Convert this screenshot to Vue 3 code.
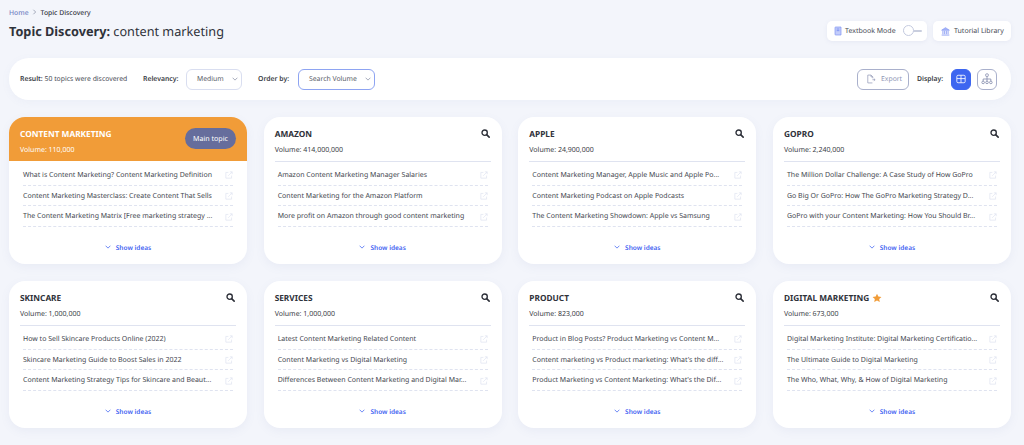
<template>
  <div class="page">
    <div class="breadcrumb">
      <span class="crumb-home">Home</span>
      <svg class="crumb-sep" viewBox="0 0 6 8" width="5" height="6"><path d="M1.5 1l3 3-3 3" fill="none" stroke="#8a90a6" stroke-width="1" /></svg>
      <span class="crumb-current">Topic Discovery</span>
    </div>

    <div class="head">
      <h1 class="title"><strong>Topic Discovery:</strong> content marketing</h1>
      <div class="head-actions">
        <div class="pill pill-mode">
          <svg viewBox="0 0 12 14" width="8" height="10">
            <path d="M1.5 12V2a1 1 0 0 1 1-1h8v12h-8a1 1 0 0 1-1-1z" fill="#c3cdfb" stroke="#7d92f2" stroke-width="1" />
            <path d="M4 4h4M4 6.500h4" stroke="#5f78ee" stroke-width="1" />
          </svg>
          <span>Textbook Mode</span>
          <span class="switch"><span class="knob"></span></span>
        </div>
        <div class="pill pill-lib">
          <svg viewBox="0 0 14 14" width="9" height="9">
            <path d="M1 5l6-4 6 4z" fill="#a9b7f9" stroke="#7d92f2" stroke-width="1" />
            <path d="M3 6v5M5.700 6v5M8.300 6v5M11 6v5M1 12.500h12" stroke="#7d92f2" stroke-width="1.300" />
          </svg>
          <span>Tutorial Library</span>
        </div>
      </div>
    </div>

    <div class="toolbar">
      <div class="result"><b>Result:</b> 50 topics were discovered</div>
      <b class="label label-rel">Relevancy:</b>
      <div class="select select-rel">
        <span>Medium</span>
        <svg viewBox="0 0 8 5" width="6" height="4"><path d="M.8.800L4 4l3.200-3.200" fill="none" stroke="#8a90a6" stroke-width="1" /></svg>
      </div>
      <b class="label label-order">Order by:</b>
      <div class="select select-order">
        <span>Search Volume</span>
        <svg viewBox="0 0 8 5" width="6" height="4"><path d="M.8.800L4 4l3.200-3.200" fill="none" stroke="#8a90a6" stroke-width="1" /></svg>
      </div>
      <div class="toolbar-right">
        <div class="export">
          <svg viewBox="0 0 14 14" width="10" height="10">
            <path d="M9 12.500H2.500v-11H7l2.500 2.500v2M7 1.500V4h2.500" fill="none" stroke="#8f97b5" stroke-width="1" />
            <path d="M9 8h3.500M11 6.500L12.800 8 11 9.500" fill="none" stroke="#8f97b5" stroke-width="1" />
          </svg>
          <span>Export</span>
        </div>
        <b class="label label-display">Display:</b>
        <div class="view-btn view-active">
          <svg viewBox="0 0 12 12" width="10" height="10">
            <rect x="1" y="1.500" width="10" height="9" rx="1.500" fill="none" stroke="#fff" stroke-width="1" />
            <path d="M1 5.500h10M6 1.500v9" stroke="#fff" stroke-width="1" />
          </svg>
        </div>
        <div class="view-btn">
          <svg viewBox="0 0 14 14" width="12" height="12">
            <rect x="5.500" y="1" width="3" height="3" rx=".8" fill="none" stroke="#7d86a8" stroke-width=".9" />
            <circle cx="2.500" cy="11" r="1.500" fill="none" stroke="#7d86a8" stroke-width=".9" />
            <circle cx="7" cy="11" r="1.500" fill="none" stroke="#7d86a8" stroke-width=".9" />
            <circle cx="11.500" cy="11" r="1.500" fill="none" stroke="#7d86a8" stroke-width=".9" />
            <path d="M7 4v5.500M2.500 9.500V7h9v2.500" fill="none" stroke="#7d86a8" stroke-width=".9" />
          </svg>
        </div>
      </div>
    </div>

    <div class="grid">
      <div v-for="topic in topics" :key="topic.name" class="card" :class="{ 'card-main': topic.main }">
        <div class="card-head">
          <div class="card-info">
            <div class="card-name">
              {{ topic.name }}
              <svg v-if="topic.star" class="star" viewBox="0 0 24 24" width="10" height="10">
                <path d="M12 1.500l3.200 6.900 7.500.9-5.500 5.100 1.500 7.400L12 18.100l-6.700 3.700 1.500-7.400L1.300 9.300l7.500-.9z" fill="#f19c38" />
              </svg>
            </div>
            <div class="card-volume">Volume: {{ topic.volume }}</div>
          </div>
          <div v-if="topic.main" class="main-tag">Main topic</div>
          <svg v-else class="search" viewBox="0 0 16 16" width="9" height="9">
            <circle cx="6.500" cy="6.500" r="4.700" fill="none" stroke="#2c2f38" stroke-width="2.400" />
            <path d="M10 10l4.500 4.500" stroke="#2c2f38" stroke-width="2.800" stroke-linecap="round" />
          </svg>
        </div>
        <ul class="links">
          <li v-for="link in topic.links" :key="link">
            <span class="link-text">{{ link }}</span>
            <svg class="ext" viewBox="0 0 14 14" width="8" height="8">
              <path d="M11.500 8v4.500h-10v-10H6" fill="none" stroke="#dfe3f0" stroke-width="1.200" />
              <path d="M5.500 8.500L12.500 1.500M8.500 1.500h4v4" fill="none" stroke="#dfe3f0" stroke-width="1.200" />
            </svg>
          </li>
        </ul>
        <div class="ideas">
          <svg viewBox="0 0 8 5" width="6" height="4"><path d="M.8.800L4 4l3.200-3.200" fill="none" stroke="#3f63f2" stroke-width="1" /></svg>
          <span>Show ideas</span>
        </div>
      </div>
    </div>
  </div>
</template>

<script setup>
const topics = [
  {
    name: 'CONTENT MARKETING',
    volume: '110,000',
    main: true,
    links: [
      'What is Content Marketing? Content Marketing Definition',
      'Content Marketing Masterclass: Create Content That Sells',
      'The Content Marketing Matrix [Free marketing strategy ...'
    ]
  },
  {
    name: 'AMAZON',
    volume: '414,000,000',
    links: [
      'Amazon Content Marketing Manager Salaries',
      'Content Marketing for the Amazon Platform',
      'More profit on Amazon through good content marketing'
    ]
  },
  {
    name: 'APPLE',
    volume: '24,900,000',
    links: [
      'Content Marketing Manager, Apple Music and Apple Po...',
      'Content Marketing Podcast on Apple Podcasts',
      'The Content Marketing Showdown: Apple vs Samsung'
    ]
  },
  {
    name: 'GOPRO',
    volume: '2,240,000',
    links: [
      'The Million Dollar Challenge: A Case Study of How GoPro',
      'Go Big Or GoPro: How The GoPro Marketing Strategy D...',
      'GoPro with your Content Marketing: How You Should Br...'
    ]
  },
  {
    name: 'SKINCARE',
    volume: '1,000,000',
    links: [
      'How to Sell Skincare Products Online (2022)',
      'Skincare Marketing Guide to Boost Sales in 2022',
      'Content Marketing Strategy Tips for Skincare and Beaut...'
    ]
  },
  {
    name: 'SERVICES',
    volume: '1,000,000',
    links: [
      'Latest Content Marketing Related Content',
      'Content Marketing vs Digital Marketing',
      'Differences Between Content Marketing and Digital Mar...'
    ]
  },
  {
    name: 'PRODUCT',
    volume: '823,000',
    links: [
      'Product in Blog Posts? Product Marketing vs Content M...',
      "Content marketing vs Product marketing: What's the diff...",
      "Product Marketing vs Content Marketing: What's the Dif..."
    ]
  },
  {
    name: 'DIGITAL MARKETING',
    volume: '673,000',
    star: true,
    links: [
      'Digital Marketing Institute: Digital Marketing Certificatio...',
      'The Ultimate Guide to Digital Marketing',
      'The Who, What, Why, & How of Digital Marketing'
    ]
  }
]
</script>

<style>
html,
body {
  background: #f3f5fb;
}
</style>

<style scoped>
svg {
  flex: none;
}

.page {
  box-sizing: border-box;
  width: 1024px;
  height: 445px;
  overflow: hidden;
  padding: 7px 13px 0 9px;
  font-family: "Noto Sans", "Open Sans", sans-serif;
  text-rendering: geometricPrecision;
  color: #33363f;
  background: #f3f5fb;
}

.breadcrumb {
  display: flex;
  align-items: center;
  gap: 3px;
  height: 10px;
  font-size: 6.8px;
  font-weight: 500;
  white-space: nowrap;
}

.crumb-home {
  color: #7484c4;
}

.crumb-sep {
  margin-right: 1px;
}

.head {
  display: flex;
  justify-content: space-between;
  align-items: flex-start;
  height: 41px;
}

.title {
  margin: 4px 0 0;
  font-size: 12.7px;
  line-height: 20px;
  font-weight: 400;
  color: #2f323a;
  white-space: nowrap;
}

.title strong {
  font-weight: 700;
}

.head-actions {
  display: flex;
  gap: 6px;
  margin-top: 4px;
}

.pill {
  box-sizing: border-box;
  display: flex;
  align-items: center;
  height: 20px;
  border-radius: 5px;
  background: #fff;
  font-size: 7px;
  color: #4a4d57;
  white-space: nowrap;
  box-shadow: 0 1px 4px rgba(120, 130, 180, 0.1);
}

.pill-mode {
  width: 100px;
  gap: 3px;
  padding: 0 7px;
}

.pill-lib {
  width: 78px;
  gap: 4px;
  padding: 0 8px;
}

.switch {
  position: relative;
  flex: none;
  width: 19px;
  height: 2px;
  margin-left: 4px;
  background: #c9cede;
  border-radius: 2px;
}

.knob {
  position: absolute;
  left: 0;
  top: -5px;
  box-sizing: border-box;
  width: 11px;
  height: 11px;
  border-radius: 50%;
  background: #fff;
  border: 1px solid #c5cbe0;
}

.toolbar {
  display: flex;
  align-items: center;
  height: 42px;
  padding: 0 14px 0 11px;
  border-radius: 20px;
  background: #fff;
  font-size: 6.85px;
  color: #4a4d57;
  white-space: nowrap;
  box-shadow: 0 2px 8px rgba(120, 130, 180, 0.06);
}

.toolbar b,
.label {
  font-weight: 600;
  color: #3a3d46;
}

.result {
  width: 123px;
}

.label-rel {
  width: 43px;
}

.select {
  box-sizing: border-box;
  display: flex;
  align-items: center;
  justify-content: space-between;
  height: 21px;
  border-radius: 6px;
  border: 1px solid #d9def0;
  padding: 0 3px 0 10px;
  color: #5a5d68;
}

.select-rel {
  width: 56px;
  margin-right: 16px;
}

.label-order {
  width: 40px;
}

.select-order {
  width: 77px;
  border-color: #8ea4f2;
}

.toolbar-right {
  display: flex;
  align-items: center;
  margin-left: auto;
}

.export {
  box-sizing: border-box;
  display: flex;
  align-items: center;
  gap: 5px;
  width: 52px;
  height: 21px;
  padding-left: 8px;
  border: 1px solid #a9b0cc;
  border-radius: 6px;
  color: #8f97b5;
}

.label-display {
  margin-left: 8px;
  width: 34px;
}

.view-btn {
  box-sizing: border-box;
  display: flex;
  align-items: center;
  justify-content: center;
  width: 20px;
  height: 21px;
  margin-right: 6px;
  border: 1px solid #a9b0cc;
  border-radius: 6px;
}

.view-btn:last-child {
  margin-right: 0;
}

.view-active {
  border-color: #3d66f0;
  background: #3d66f0;
}

.grid {
  display: grid;
  grid-template-columns: repeat(4, 238px);
  column-gap: 16.67px;
  row-gap: 17px;
  margin-top: 17px;
}

.card {
  height: 147px;
  border-radius: 16px;
  background: #fff;
  overflow: hidden;
  box-shadow: 0 3px 10px rgba(120, 130, 180, 0.08);
}

.card-head {
  box-sizing: border-box;
  display: flex;
  justify-content: space-between;
  align-items: flex-start;
  height: 45px;
  margin: 0 11px;
  padding: 12px 1px 0 0;
  border-bottom: 1px solid #dfe3f0;
}

.card-name {
  display: flex;
  align-items: center;
  gap: 3px;
  height: 10px;
  font-size: 8.3px;
  font-weight: 700;
  color: #2f323a;
  white-space: nowrap;
}

.card-volume {
  margin-top: 7px;
  font-size: 7px;
  line-height: 10px;
  color: #3a3d46;
}

.card-main .card-head {
  margin: 0;
  height: 44px;
  padding: 12px 11px 0;
  border-bottom: 0;
  background: #f19c38;
}

.card-main .links {
  padding-top: 4px;
}

.card-main .card-name,
.card-main .card-volume {
  color: #fff;
}

.main-tag {
  display: flex;
  align-items: center;
  justify-content: center;
  width: 51px;
  height: 21px;
  margin-top: -1px;
  border-radius: 11px;
  background: #666d9c;
  font-size: 7.1px;
  color: #fff;
}

.links {
  list-style: none;
  margin: 0 14px;
  padding: 3px 0 0;
}

.links li {
  box-sizing: border-box;
  display: flex;
  align-items: center;
  justify-content: space-between;
  height: 20.7px;
  padding-top: 1px;
  border-bottom: 1px dashed #dfe3f0;
  font-size: 7px;
  color: #44474f;
}

.link-text {
  white-space: nowrap;
}

.ideas {
  display: flex;
  align-items: center;
  justify-content: center;
  gap: 5px;
  height: 10px;
  margin-top: 15px;
  font-size: 6.5px;
  font-weight: 600;
  color: #3f63f2;
}
</style>
